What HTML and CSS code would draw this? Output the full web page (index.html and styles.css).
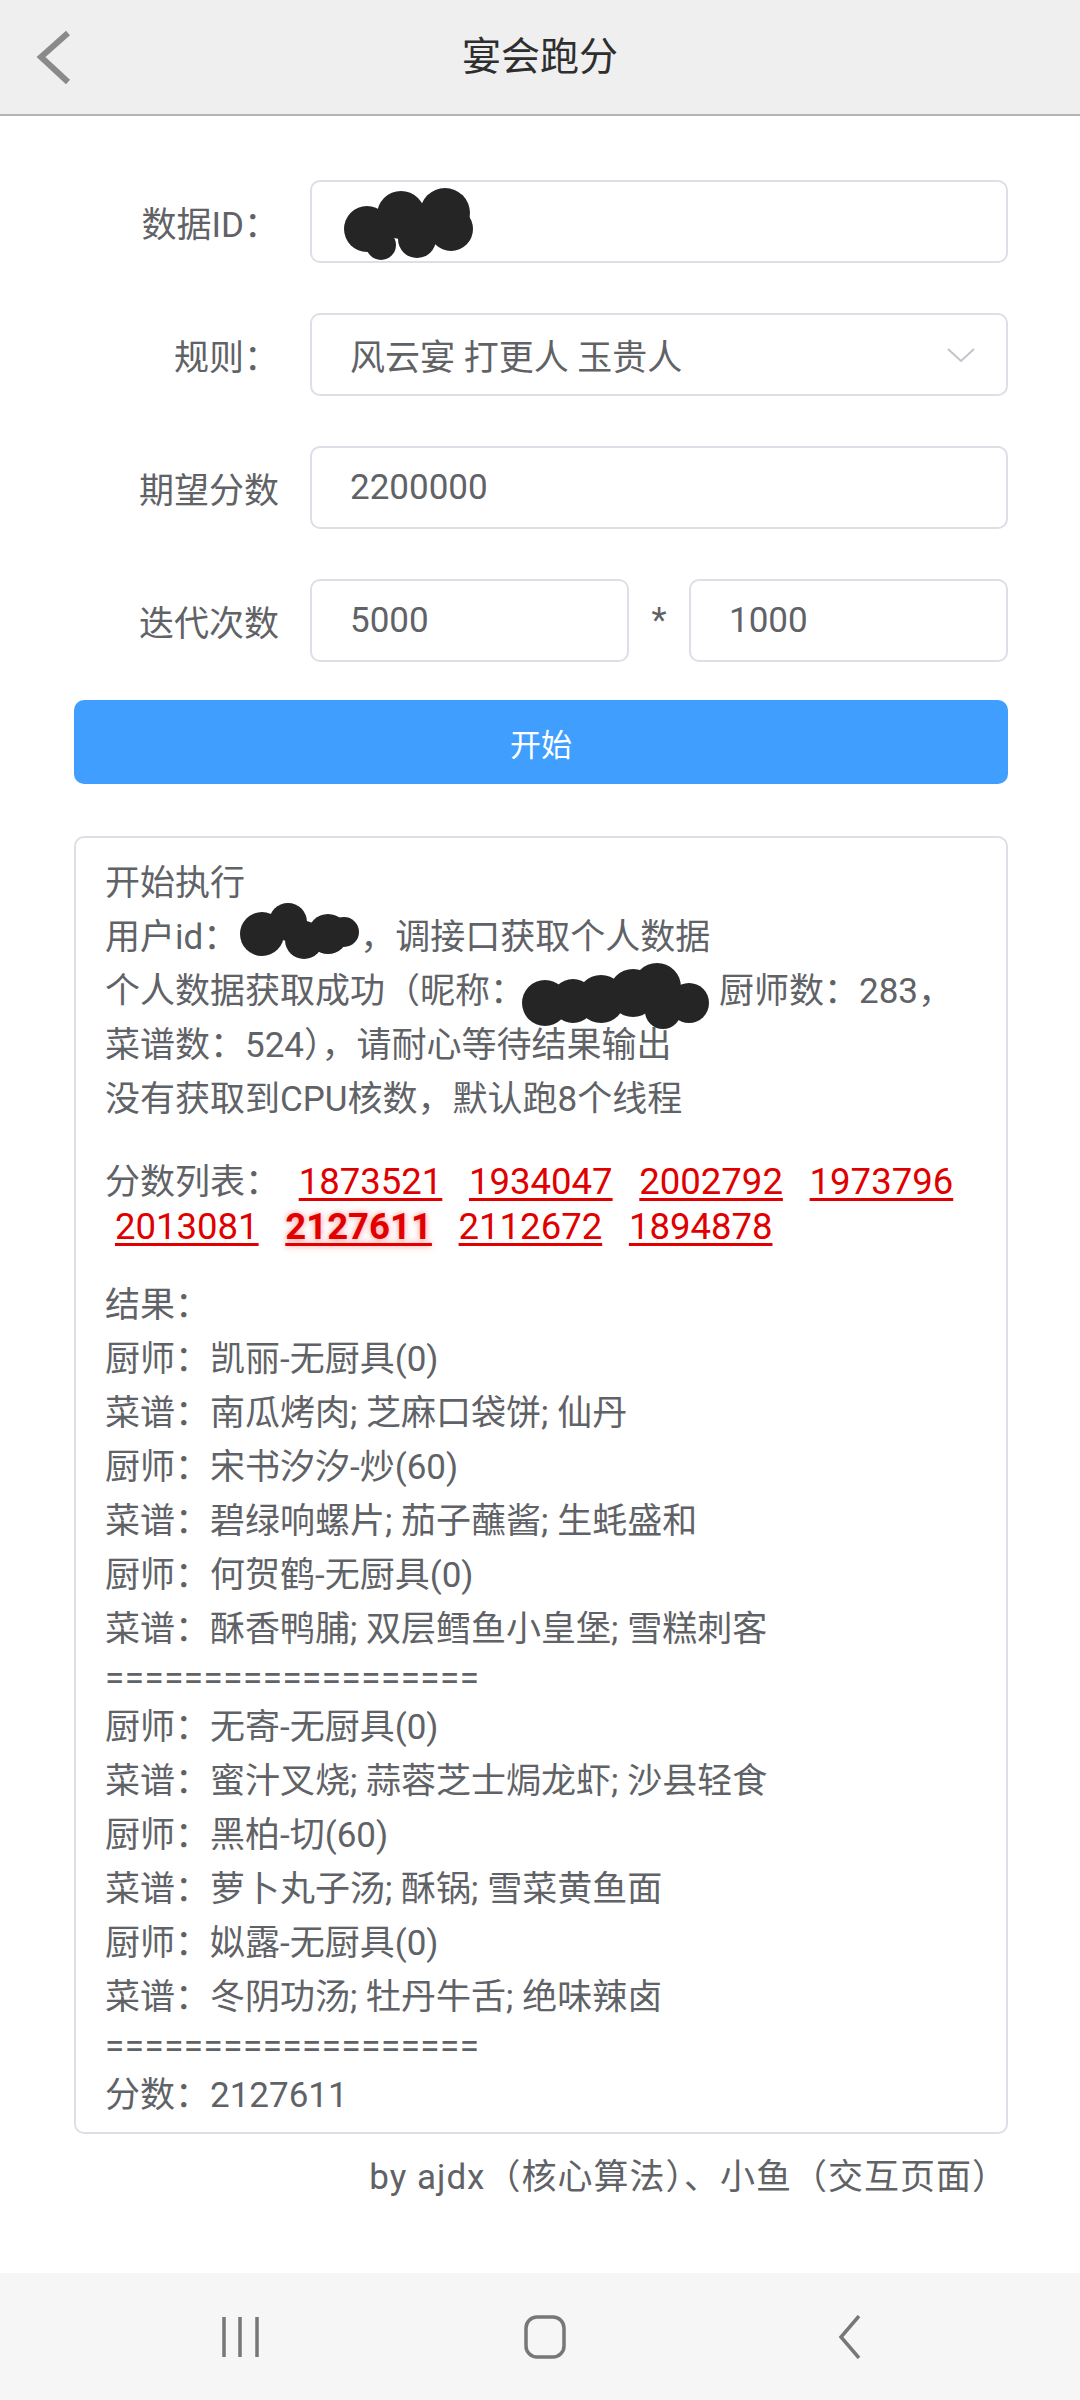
FILE: index.html
```html
<!DOCTYPE html>
<html lang="zh-CN">
<head>
<meta charset="utf-8">
<title>宴会跑分</title>
<link rel="stylesheet" href="styles.css">
</head>
<body>
<div class="page">
  <header class="topbar">
    <svg class="back" viewBox="0 0 116 114" width="116" height="114"><polyline points="68,33 41,57 68,82" fill="none" stroke="#8a8a8a" stroke-width="6"/></svg>
    <h1 class="title">宴会跑分</h1>
    <span class="spacer"></span>
  </header>

  <main class="content">
    <div class="form">
      <div class="row">
        <label class="label">数据ID：</label>
        <div class="field">
          <input class="input" type="text" value="">
          <svg class="redact redact-id" viewBox="0 0 141 73" width="141" height="73"><g fill="#252525"><circle cx="26" cy="42" r="23"/><circle cx="40" cy="58" r="15"/><circle cx="60" cy="28" r="24"/><circle cx="76" cy="52" r="19"/><circle cx="104" cy="26" r="25"/><circle cx="110" cy="42" r="22"/></g></svg>
        </div>
      </div>
      <div class="row">
        <label class="label">规则：</label>
        <div class="field">
          <div class="input select">风云宴 打更人 玉贵人
            <svg class="caret" viewBox="0 0 30 16" width="30" height="16"><polyline points="2,2 15,14 28,2" fill="none" stroke="#c0c4cc" stroke-width="2"/></svg>
          </div>
        </div>
      </div>
      <div class="row">
        <label class="label">期望分数</label>
        <div class="field">
          <input class="input" type="text" value="2200000">
        </div>
      </div>
      <div class="row row-last">
        <label class="label">迭代次数</label>
        <div class="field field-half">
          <input class="input" type="text" value="5000">
        </div>
        <span class="times">*</span>
        <div class="field">
          <input class="input" type="text" value="1000">
        </div>
      </div>
    </div>

    <button class="start" type="button">开始</button>

    <div class="output">
      <div class="line">开始执行</div>
      <div class="line">用户id：<span class="blob blob-uid"><svg viewBox="0 0 122 57" width="122" height="57"><g fill="#252525"><circle cx="24" cy="32" r="22"/><circle cx="50" cy="20" r="19"/><circle cx="66" cy="38" r="19"/><circle cx="90" cy="32" r="20"/><circle cx="106" cy="30" r="15"/></g></svg></span>，调接口获取个人数据</div>
      <div class="line">个人数据获取成功（昵称：<span class="blob blob-nick"><svg viewBox="0 0 190 67" width="190" height="67"><g fill="#252525"><circle cx="24" cy="40" r="23"/><circle cx="52" cy="38" r="22"/><circle cx="80" cy="36" r="24"/><circle cx="112" cy="30" r="24"/><circle cx="136" cy="24" r="24"/><circle cx="142" cy="48" r="18"/><circle cx="168" cy="40" r="20"/></g></svg></span>厨师数：283，</div>
      <div class="line">菜谱数：524），请耐心等待结果输出</div>
      <div class="line">没有获取到CPU核数，默认跑8个线程</div>

      <div class="scores"><span class="scores-label">分数列表：</span> <a class="score">1873521</a> <a class="score">1934047</a> <a class="score">2002792</a> <a class="score">1973796</a> <a class="score">2013081</a> <a class="score best">2127611</a> <a class="score">2112672</a> <a class="score">1894878</a></div>

      <div class="result">
        <div class="line">结果：</div>
        <div class="line">厨师：凯丽-无厨具(0)</div>
        <div class="line">菜谱：南瓜烤肉; 芝麻口袋饼; 仙丹</div>
        <div class="line">厨师：宋书汐汐-炒(60)</div>
        <div class="line">菜谱：碧绿响螺片; 茄子蘸酱; 生蚝盛和</div>
        <div class="line">厨师：何贺鹤-无厨具(0)</div>
        <div class="line">菜谱：酥香鸭脯; 双层鳕鱼小皇堡; 雪糕刺客</div>
        <div class="sep">===================</div>
        <div class="line">厨师：无寄-无厨具(0)</div>
        <div class="line">菜谱：蜜汁叉烧; 蒜蓉芝士焗龙虾; 沙县轻食</div>
        <div class="line">厨师：黑柏-切(60)</div>
        <div class="line">菜谱：萝卜丸子汤; 酥锅; 雪菜黄鱼面</div>
        <div class="line">厨师：姒露-无厨具(0)</div>
        <div class="line">菜谱：冬阴功汤; 牡丹牛舌; 绝味辣卤</div>
        <div class="sep">===================</div>
        <div class="line">分数：2127611</div>
      </div>
    </div>

    <p class="credit">by ajdx（核心算法）、小鱼（交互页面）</p>
  </main>

  <nav class="navbar">
    <svg class="nav-icon" viewBox="0 0 40 44" width="40" height="44"><g stroke="#777" stroke-width="3.5" fill="none"><line x1="3" y1="2" x2="3" y2="42"/><line x1="19" y1="2" x2="19" y2="42"/><line x1="36" y1="2" x2="36" y2="42"/></g></svg>
    <svg class="nav-icon" viewBox="0 0 44 44" width="44" height="44"><rect x="3" y="2" width="38" height="40" rx="11" fill="none" stroke="#777" stroke-width="3.5"/></svg>
    <svg class="nav-icon" viewBox="0 0 40 44" width="40" height="44"><polyline points="30,1 12,22 30,43" fill="none" stroke="#777" stroke-width="3.5"/></svg>
  </nav>
</div>
</body>
</html>
```

FILE: styles.css
```css
* {
  box-sizing: border-box;
}

html, body {
  margin: 0;
  padding: 0;
  background: #ffffff;
}

body {
  font-family: "Roboto", "Noto Sans CJK SC", sans-serif;
  color: #606266;
}

.page {
  width: 1080px;
  min-height: 2400px;
  display: flex;
  flex-direction: column;
}

/* Header */
.topbar {
  height: 116px;
  background: #efefef;
  border-bottom: 2px solid #b3b3b3;
  display: grid;
  grid-template-columns: 116px 1fr 116px;
  align-items: center;
}

.back {
  display: block;
}

.title {
  margin: 0;
  text-align: center;
  font-size: 39px;
  font-weight: 400;
  color: #2e2e2e;
  line-height: 114px;
}

/* Content */
.content {
  flex: 1;
  padding: 64px 72px 0 74px;
}

.form {
  display: flex;
  flex-direction: column;
}

.row {
  display: flex;
  align-items: center;
  height: 83px;
  margin-bottom: 50px;
}

.row-last {
  margin-bottom: 38px;
}

.label {
  width: 236px;
  flex: none;
  padding-right: 31px;
  text-align: right;
  font-size: 35px;
  color: #606266;
}

.field {
  flex: 1;
  height: 83px;
  position: relative;
}

.field-half {
  flex: none;
  width: 319px;
}

.times {
  width: 60px;
  flex: none;
  text-align: center;
  font-size: 35px;
  color: #606266;
}

.input {
  display: block;
  width: 100%;
  height: 83px;
  border: 2px solid #dcdfe6;
  border-radius: 10px;
  background: #fff;
  padding: 0 38px;
  font-family: inherit;
  font-size: 35px;
  color: #606266;
  outline: none;
}

.select {
  display: flex;
  align-items: center;
  justify-content: space-between;
  padding-right: 30px;
}

.caret {
  display: block;
}

.redact-id {
  position: absolute;
  left: 31px;
  top: 7px;
}

.start {
  display: block;
  width: 100%;
  height: 84px;
  border: none;
  border-radius: 10px;
  background: #409eff;
  color: #ffffff;
  font-family: inherit;
  font-size: 31px;
  padding: 0;
}

/* Output */
.output {
  margin-top: 52px;
  border: 2px solid #dcdfe6;
  border-radius: 10px;
  padding: 19px 30px 9px 29px;
  font-size: 35px;
  color: #5f6266;
}

.line {
  line-height: 54px;
  white-space: nowrap;
}

.sep {
  line-height: 44px;
  letter-spacing: 0.5px;
}

.blob {
  display: inline-block;
  position: relative;
  height: 0;
  vertical-align: baseline;
}

.blob svg {
  position: absolute;
  left: 0;
  display: block;
}

.blob-uid {
  width: 122px;
}

.blob-uid svg {
  bottom: -10px;
}

.blob-nick {
  width: 194px;
}

.blob-nick svg {
  bottom: -27px;
  left: -4px;
}

.scores {
  margin-top: 33px;
  line-height: 44px;
}

.scores-label {
  white-space: nowrap;
}

.score {
  margin: 0 8px 0 10px;
  color: #e00000;
  text-decoration: underline;
  text-decoration-thickness: 3px;
  text-underline-offset: 4px;
  font-size: 36.5px;
  white-space: nowrap;
}

.score.best {
  font-weight: 700;
  text-shadow: 0 0 6px rgba(255, 0, 0, 0.45);
}

.result {
  margin-top: 29px;
}

.credit {
  margin: 19px 0 0 0;
  padding-right: 0;
  text-align: right;
  font-size: 35px;
  line-height: 50px;
  letter-spacing: 1px;
  color: #606266;
}

/* Navigation bar */
.navbar {
  height: 127px;
  background: #f6f6f6;
  display: flex;
  align-items: center;
  justify-content: center;
  gap: 262px;
  padding-left: 10px;
}

.nav-icon {
  display: block;
}
```
